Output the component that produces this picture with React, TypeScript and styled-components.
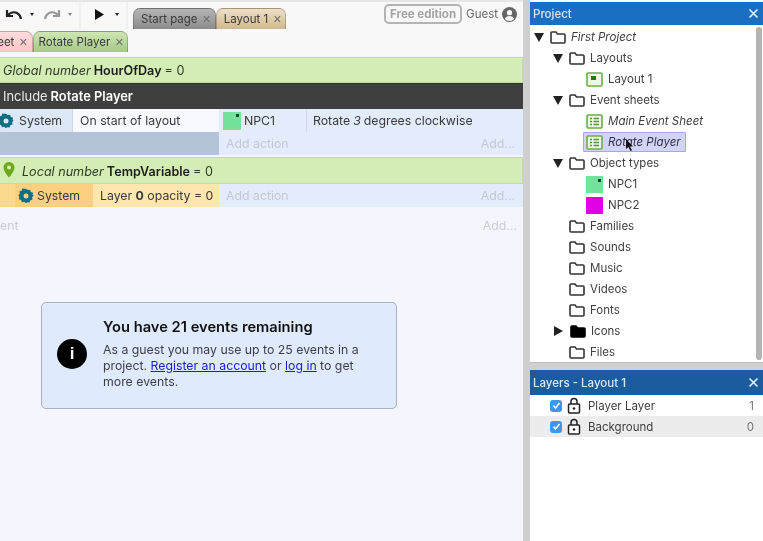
import React from "react";
import styled, { createGlobalStyle } from "styled-components";

const Global = createGlobalStyle`
  html, body { margin: 0; padding: 0; background: #f5f6fd; }
  body { font-family: Inter, "Liberation Sans", sans-serif; font-size: 12px; color: #333; }
`;

const Page = styled.div`
  width: 763px; height: 541px; display: flex; overflow: hidden; background: #f5f6fd; filter: blur(0.35px);
`;
const Main = styled.main`
  width: 523px; flex: none; display: flex; flex-direction: column; overflow: hidden;
`;
const Splitter = styled.div`
  width: 7px; flex: none; background: #cfcfcf;
`;
const Side = styled.aside`
  flex: 1; display: flex; flex-direction: column; background: #fff; padding-top: 2px;
`;

const TopBar = styled.div`
  height: 29px; flex: none; display: flex; background: #f8f8f8; border-top: 2px solid #e6e6e6; box-sizing: border-box;
`;
const ToolGroup = styled.div<{ $w: number }>`
  width: ${p => p.$w}px; flex: none; display: flex; align-items: center; box-sizing: border-box;
  padding-left: 5px; gap: 3px; border-right: 2px solid #efefef; padding-bottom: 2px;
`;
const Caret = styled.span<{ $light?: boolean }>`
  width: 0; height: 0; border-left: 2.5px solid transparent; border-right: 2.5px solid transparent;
  border-top: 3px solid ${p => (p.$light ? "#888" : "#222")}; margin: 0 6px 0 4px;
`;
const PlayIcon = styled.svg`
  margin-left: 8px;
`;
const TabRow = styled.div<{ $shift?: number }>`
  display: flex; align-items: flex-end; margin-left: ${p => p.$shift ?? 0}px;
`;
const Tab = styled.div<{ $bg: string; $pl?: number }>`
  height: 21px; box-sizing: border-box; padding: 0 4px 0 ${p => p.$pl ?? 7}px; display: flex; align-items: center; gap: 5px;
  background: ${p => p.$bg}; color: #3a3a3a; font-size: 11.5px;
  border-radius: 7px 7px 0 0; border: 1px solid rgba(0,0,0,.2); border-bottom: 0; white-space: nowrap;
`;
const TabClose = styled.span`
  font-size: 14px; color: #6a6a6a; line-height: 1; font-family: "Liberation Sans", sans-serif;
`;
const Account = styled.div`
  margin-left: auto; display: flex; align-items: center; gap: 4px; padding: 0 6px 3px 0; color: #666; font-size: 11.5px;
`;
const Badge = styled.span`
  border: 2px solid #b4b4b4; border-radius: 5px; color: #a4a4a4; font-weight: 700; font-size: 11.5px;
  height: 16px; line-height: 16px; padding: 0 4px; white-space: nowrap;
`;
const SecondTabs = styled.div`
  height: 27px; flex: none; background: #f8f8f8; box-sizing: border-box; padding-top: 2px;
  display: flex; align-items: flex-start;
`;

const Sheet = styled.div`
  flex: 1; margin-top: 1px; display: flex; flex-direction: column;
`;
const VarRow = styled.div<{ $h: number }>`
  height: ${p => p.$h}px; flex: none; box-sizing: border-box; background: #d3edb4; border: 1px solid #c3dca6;
  border-left: 0; display: flex; align-items: center; gap: 3px; padding: 1px 0 0 3px; white-space: nowrap; color: #2f3a28;
  font-size: 12.6px;
  b { font-weight: 600; color: #1c1c1c; }
`;
const Include = styled.div`
  height: 26px; flex: none; background: #3f3f3f; color: #e8e8e8; display: flex; align-items: center; padding-left: 3px;
  font-size: 12.9px; border-top: 1px solid #2c3a20; box-sizing: border-box;
  b { font-weight: 600; color: #fff; margin-left: 3px; }
`;
const EventRow = styled.div<{ $h: number }>`
  height: ${p => p.$h}px; flex: none; display: flex; background: #e3ecfb; font-size: 12.3px; color: #3a3a3a;
`;
const RowGap = styled.div`
  height: 2px; flex: none;
`;
const Cell = styled.div<{ $w?: number; $bg?: string; $pl?: number; $line?: boolean; $gap?: number }>`
  ${p => (p.$w ? `width: ${p.$w}px; flex: none;` : "flex: 1;")}
  background: ${p => p.$bg ?? "transparent"}; box-sizing: border-box; padding-left: ${p => p.$pl ?? 0}px;
  display: flex; align-items: center; gap: ${p => p.$gap ?? 3}px; white-space: nowrap; min-width: 0;
  ${p => (p.$line ? "border-right: 1px solid #cfd8e8;" : "")}
`;
const AddText = styled.span<{ $end?: boolean }>`
  color: #c3c8d6; ${p => (p.$end ? "margin-left: auto; padding-right: 8px;" : "")}
`;
const Bare = styled.div`
  height: 33px; margin-top: 2px; flex: none; display: flex; align-items: center; font-size: 12.3px; padding: 0 6px 0 0; color: #c9ccd6;
  span:last-child { margin-left: auto; }
`;
const ObjSwatch = styled.span`
  width: 18px; height: 18px; background: #74e29b; position: relative; flex: none;
  &::after { content: ""; position: absolute; top: 2px; right: 2px; width: 3px; height: 3px; background: #143; }
`;

const DialogArea = styled.div`
  flex: 1; padding: 60px 0 0 41px;
`;
const Dialog = styled.section`
  width: 356px; height: 107px; box-sizing: border-box; background: #dfebfd; border: 1.5px solid #a9b1bd; border-radius: 5px;
  display: flex; align-items: center; gap: 16px; padding: 0 15px 4px;
`;
const InfoDot = styled.div`
  width: 30px; height: 30px; border-radius: 50%; background: #000; color: #fff; flex: none; font-weight: 800;
  display: flex; align-items: center; justify-content: center; font-size: 17px; font-family: "Liberation Sans", sans-serif;
`;
const DialogBody = styled.div`
  width: 272px; color: #3c3f44; font-size: 12.3px; line-height: 16px;
  h2 { margin: 0 0 6px; font-size: 14.7px; line-height: 18px; font-weight: 600; color: #111; }
  p { margin: 0; }
  a { color: #1a1ae0; text-decoration: underline; }
`;

const PanelHead = styled.header<{ $bg: string; $h: number }>`
  height: ${p => p.$h}px; flex: none; background: ${p => p.$bg}; color: #d8e8f8; display: flex; align-items: center;
  justify-content: space-between; padding: 0 4px 0 3px; font-size: 11.5px; font-weight: 500;
`;
const TreeWrap = styled.div`
  height: 337px; flex: none; display: flex; box-sizing: border-box; overflow: hidden;
`;
const Tree = styled.ul`
  flex: 1; list-style: none; margin: 0; padding: 1.5px 0 0; min-width: 0;
`;
const Scroll = styled.div`
  width: 6px; margin: 2px 1px 2px 0; background: #b4b4b4; border-radius: 3px; flex: none;
`;
const TreeRow = styled.li<{ $level: number; $leaf?: boolean }>`
  height: 21px; display: flex; align-items: center; color: #404040; font-size: 11.5px;
  padding-left: ${p => 4 + p.$level * 19 + (p.$leaf ? 14 : 0)}px;
`;
const Twist = styled.span<{ $open?: boolean; $hidden?: boolean }>`
  width: 0; height: 0; flex: none; margin-right: 6px; box-sizing: content-box;
  ${p => (p.$hidden ? "border: 5px solid transparent; border-width: 5px 5px 0 5px; visibility: hidden;" :
    p.$open ? "border-left: 5.5px solid transparent; border-right: 5.5px solid transparent; border-top: 9px solid #222;"
    : "border-top: 5px solid transparent; border-bottom: 5px solid transparent; border-left: 9px solid #222; margin-left: 1px; margin-right: 7px;")}
`;
const Label = styled.span<{ $italic?: boolean; $gap?: number }>`
  margin-left: ${p => p.$gap ?? 5}px; white-space: nowrap;
  ${p => (p.$italic ? "font-style: italic;" : "")}
`;
const Selected = styled.div`
  display: flex; align-items: center; margin-left: -3px; padding: 0 4px 0 2px; height: 20px;
  background: #d3d3f5; border: 1px solid #a7a7e8; border-radius: 1px; box-sizing: border-box; position: relative;
  color: #303048;
`;
const Cursor = styled.svg`
  position: absolute; left: 41px; top: 6px;
`;
const Swatch = styled.span<{ $bg: string; $dot?: boolean }>`
  width: 17px; height: 17px; flex: none; background: ${p => p.$bg}; position: relative; box-sizing: border-box;
  ${p => (p.$dot ? `&::after { content: ""; position: absolute; top: 3px; right: 2px; width: 3px; height: 3px; background: #143; }` : "")}
`;
const Gap = styled.div`
  height: 8px; flex: none; background: #d0d0d0; border-top: 1px solid #bdbdbd; box-sizing: border-box;
`;
const LayerRow = styled.div<{ $alt?: boolean }>`
  height: 21px; display: flex; align-items: center; background: ${p => (p.$alt ? "#ececec" : "#fff")}; padding: 0 9px 0 20px; color: #404040; font-size: 11.5px;
`;
const Check = styled.span`
  width: 12px; height: 12px; border-radius: 3px; background: #3d97f0; display: flex; align-items: center; justify-content: center; flex: none; margin-right: 5px;
`;
const Zorder = styled.span`
  margin-left: auto; color: #777;
`;
const GearIcon = styled.svg<{ $offset?: number }>`
  flex: none; margin-left: ${p => p.$offset ?? 0}px;
`;
const PinIcon = styled.svg`
  flex: none; margin: 0 4px 2px 0;
`;
const MirrorSvg = styled.svg<{ $flip?: boolean }>`
  ${p => (p.$flip ? "transform: scaleX(-1);" : "")}
`;
const LockIcon = styled.svg`
  flex: none;
`;

const Folder = ({ filled }: { filled?: boolean }) => (
  <svg width="16" height="14" viewBox="0 0 16 14">
    <path d="M1 3a1 1 0 0 1 1-1h4l1.500 2H14a1 1 0 0 1 1 1v7a1 1 0 0 1-1 1H2a1 1 0 0 1-1-1z" fill={filled ? "#000" : "none"} stroke={filled ? "#000" : "#333"} strokeWidth="1.600" />
  </svg>
);
const LayoutIcon = () => (
  <svg width="17" height="15" viewBox="0 0 17 15">
    <rect x="1" y="1" width="15" height="13" rx="1" fill="#eef6e6" stroke="#6cae45" strokeWidth="1.600" />
    <rect x="5" y="4" width="5" height="4" fill="#1d7a1d" />
  </svg>
);
const SheetIcon = () => (
  <svg width="17" height="15" viewBox="0 0 17 15">
    <rect x="1" y="1" width="15" height="13" rx="1" fill="#eef6e6" stroke="#6cae45" strokeWidth="1.600" />
    <path d="M4 4.500h2M4 7.500h2M4 10.500h2M7.500 4.500h5.500M7.500 7.500h5.500M7.500 10.500h5.500" stroke="#4f9a35" strokeWidth="1.500" />
  </svg>
);
const Gear = ({ offset, hole = "#e3ecfb" }: { offset?: number; hole?: string }) => (
  <GearIcon $offset={offset} width="16" height="16" viewBox="0 0 16 16">
    <path d="M8 .8l1.900 1.500 2.400-.4.800 2.300 2.300.8-.4 2.400L16 8l-1.500 1.900.4 2.400-2.300.8-.8 2.300-2.400-.4L8 16.200l-1.900-1.500-2.400.4-.8-2.300-2.300-.8.400-2.400L0 8l1.500-1.900-.4-2.400 2.300-.8.800-2.300 2.400.4z" fill="#0f6f80" transform="scale(.95) translate(.4 -.1)" />
    <circle cx="8" cy="8" r="2.500" fill={hole} />
  </GearIcon>
);
const Pin = () => (
  <PinIcon width="12" height="16" viewBox="0 0 12 16">
    <path d="M6 0a5.500 5.500 0 0 1 5.500 5.500C11.500 9.500 6 15.500 6 15.500S.5 9.500.5 5.500A5.500 5.500 0 0 1 6 0z" fill="#6fa81e" />
    <circle cx="6" cy="5.500" r="2" fill="#d3edb4" />
  </PinIcon>
);
const Undo = ({ light }: { light?: boolean }) => (
  <MirrorSvg $flip={light} width="18" height="12" viewBox="0 0 18 12">
    <path d="M2 1v6h6M2.500 6.500C5 3.500 9 2.500 12 4c2 1 3.500 3 4 6" fill="none" stroke={light ? "#999" : "#222"} strokeWidth="2.200" />
  </MirrorSvg>
);
const Lock = () => (
  <LockIcon width="14" height="17" viewBox="0 0 14 17">
    <path d="M4 7V4.500a3 3 0 0 1 6 0V7" fill="none" stroke="#222" strokeWidth="1.500" />
    <rect x="1.500" y="7" width="11" height="9" rx="1" fill="#fff" stroke="#222" strokeWidth="1.500" />
    <circle cx="7" cy="11.500" r="1.300" fill="#222" />
  </LockIcon>
);
const CloseX = () => (
  <svg width="11" height="11" viewBox="0 0 11 11">
    <path d="M1.500 1.500l8 8M9.500 1.500l-8 8" stroke="#e8f2fb" strokeWidth="1.600" />
  </svg>
);
const User = () => (
  <svg width="15" height="15" viewBox="0 0 15 15">
    <circle cx="7.500" cy="7.500" r="7.500" fill="#666" />
    <circle cx="7.500" cy="5.700" r="2.600" fill="#f8f8f8" />
    <path d="M2.800 12c.8-2 2.500-3 4.700-3s3.900 1 4.700 3c-1.200 1.300-2.900 2-4.700 2s-3.500-.7-4.700-2z" fill="#f8f8f8" />
  </svg>
);
const Tick = () => (
  <svg width="9" height="9" viewBox="0 0 9 9"><path d="M1.500 4.500l2 2.500 4-5" fill="none" stroke="#fff" strokeWidth="1.500" /></svg>
);

const folders = ["Families", "Sounds", "Music", "Videos", "Fonts"];

export default function App() {
  return (
    <Page>
      <Global />
      <Main>
        <TopBar>
          <ToolGroup $w={81}>
            <Undo /><Caret />
            <Undo light /><Caret $light />
          </ToolGroup>
          <ToolGroup $w={47}>
            <PlayIcon width="14" height="14" viewBox="0 0 14 14"><path d="M1 1l9 5.500-9 5.500z" fill="#111" /></PlayIcon>
            <Caret />
          </ToolGroup>
          <TabRow $shift={5}>
            <Tab $bg="linear-gradient(#b5b5b5,#8c8c8c)">Start page <TabClose>×</TabClose></Tab>
            <Tab $bg="linear-gradient(#eee0c8,#cfb88e)">Layout 1 <TabClose>×</TabClose></Tab>
          </TabRow>
          <Account>
            <Badge>Free edition</Badge>Guest<User />
          </Account>
        </TopBar>
        <SecondTabs>
          <TabRow $shift={-23}>
            <Tab $pl={5} $bg="linear-gradient(#ffdcdc,#ffc4c4)">Sheet <TabClose>×</TabClose></Tab>
            <Tab $pl={5} $bg="linear-gradient(#cfe6b4,#a5c887)">Rotate Player <TabClose>×</TabClose></Tab>
          </TabRow>
        </SecondTabs>
        <Sheet>
          <VarRow $h={26}><i>Global number</i> <b>HourOfDay</b> = 0</VarRow>
          <Include>Include <b>Rotate Player</b></Include>
          <EventRow $h={23}>
            <Cell $w={73} $bg="#dce8f8" $line $gap={5}><Gear offset={-2} hole="#dce8f8" />System</Cell>
            <Cell $w={146} $bg="#f7f9fe" $pl={7}>On start of layout</Cell>
            <Cell $w={88} $line $pl={4}><ObjSwatch />NPC1</Cell>
            <Cell $pl={6}>Rotate <i>3</i> degrees clockwise</Cell>
          </EventRow>
          <EventRow $h={23}>
            <Cell $w={219} $bg="#b5c3d9" />
            <Cell $pl={7}><AddText>Add action</AddText><AddText $end>Add...</AddText></Cell>
          </EventRow>
          <RowGap />
          <VarRow $h={27}><Pin /><i>Local number</i> <b>TempVariable</b> = 0</VarRow>
          <EventRow $h={23}>
            <Cell $w={15} $bg="#fcd98c" />
            <Cell $w={78} $bg="#fbd181" $pl={3}><Gear hole="#fbd181" />System</Cell>
            <Cell $w={126} $bg="#fee6ae" $pl={7}><span>Layer <b>0</b> opacity = 0</span></Cell>
            <Cell $pl={7}><AddText>Add action</AddText><AddText $end>Add...</AddText></Cell>
          </EventRow>
          <Bare><span>ent</span><span>Add...</span></Bare>
          <DialogArea>
            <Dialog>
              <InfoDot>i</InfoDot>
              <DialogBody>
                <h2>You have 21 events remaining</h2>
                <p>As a guest you may use up to 25 events in a project. <a href="#r">Register an account</a> or <a href="#l">log in</a> to get more events.</p>
              </DialogBody>
            </Dialog>
          </DialogArea>
        </Sheet>
      </Main>
      <Splitter />
      <Side>
        <PanelHead $bg="#1b6fc2" $h={23}>Project <CloseX /></PanelHead>
        <TreeWrap>
          <Tree>
            <TreeRow $level={0}><Twist $open /><Folder /><Label $italic>First Project</Label></TreeRow>
            <TreeRow $level={1}><Twist $open /><Folder /><Label>Layouts</Label></TreeRow>
            <TreeRow $level={2} $leaf><LayoutIcon /><Label>Layout 1</Label></TreeRow>
            <TreeRow $level={1}><Twist $open /><Folder /><Label>Event sheets</Label></TreeRow>
            <TreeRow $level={2} $leaf><SheetIcon /><Label $italic>Main Event Sheet</Label></TreeRow>
            <TreeRow $level={2} $leaf>
              <Selected>
                <SheetIcon /><Label $italic>Rotate Player</Label>
                <Cursor width="8" height="12" viewBox="0 0 8 12"><path d="M1 0v10l2.500-2 2 4 1.500-.8-2-3.700h3z" fill="#111" /></Cursor>
              </Selected>
            </TreeRow>
            <TreeRow $level={1}><Twist $open /><Folder /><Label>Object types</Label></TreeRow>
            <TreeRow $level={2} $leaf><Swatch $bg="#74e29b" $dot /><Label>NPC1</Label></TreeRow>
            <TreeRow $level={2} $leaf><Swatch $bg="#e000e6" /><Label>NPC2</Label></TreeRow>
            {folders.map(f => (
              <TreeRow key={f} $level={1}><Twist $hidden /><Folder /><Label>{f}</Label></TreeRow>
            ))}
            <TreeRow $level={1}><Twist /><Folder filled /><Label>Icons</Label></TreeRow>
            <TreeRow $level={1}><Twist $hidden /><Folder /><Label>Files</Label></TreeRow>
          </Tree>
          <Scroll />
        </TreeWrap>
        <Gap />
        <PanelHead $bg="#1a5c9e" $h={25}>Layers - Layout 1 <CloseX /></PanelHead>
        <LayerRow><Check><Tick /></Check><Lock /><Label $gap={7}>Player Layer</Label><Zorder>1</Zorder></LayerRow>
        <LayerRow $alt><Check><Tick /></Check><Lock /><Label $gap={7}>Background</Label><Zorder>0</Zorder></LayerRow>
      </Side>
    </Page>
  );
}
